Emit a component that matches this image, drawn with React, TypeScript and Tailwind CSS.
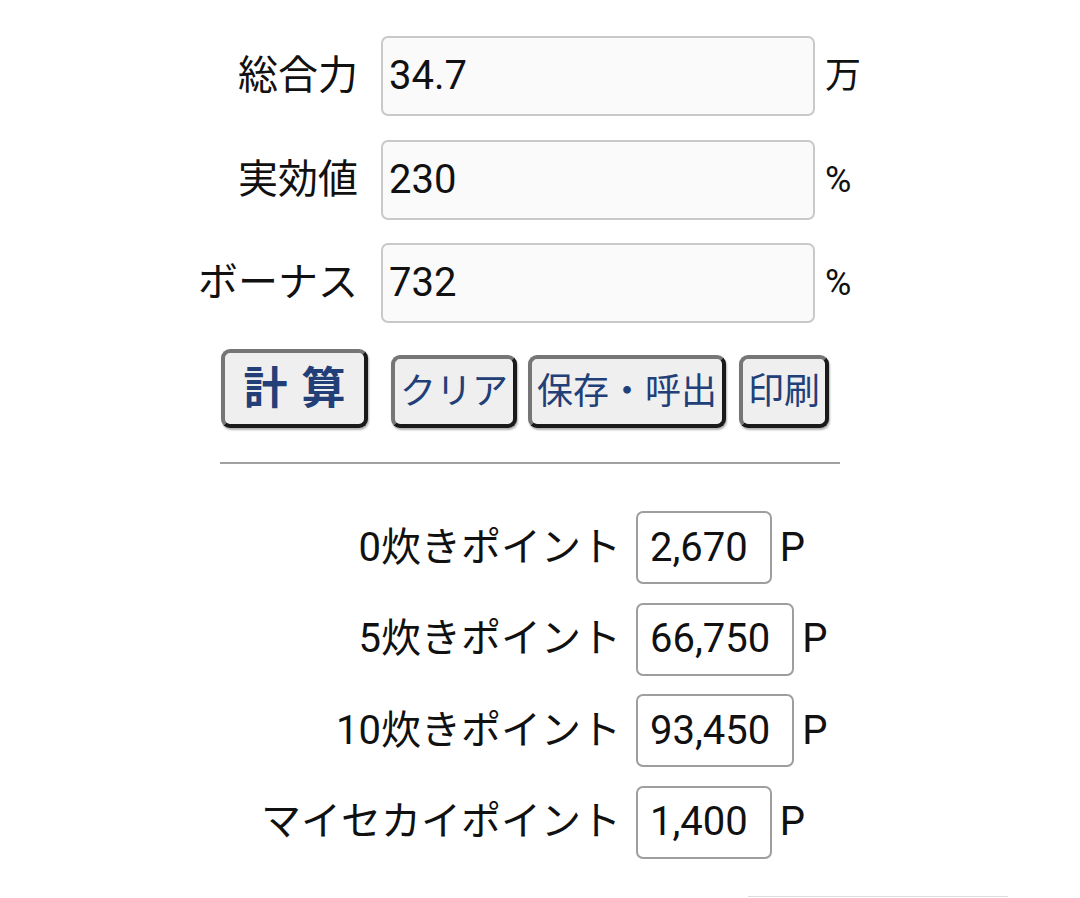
import React from 'react';

const font = { fontFamily: 'Roboto, "Noto Sans CJK JP", sans-serif' };

interface FieldRowProps {
  label: string;
  value: string;
  unit: string;
}

const FieldRow: React.FC<FieldRowProps> = ({ label, value, unit }) => (
  <div className="flex items-center">
    <div className="w-[180px] text-right text-[40px] leading-none text-[#111]">{label}</div>
    <div className="ml-[23px] w-[434px] h-[80px] flex items-center pl-[6px] bg-[#fafafa] border-2 border-[#c9c9c9] rounded-[7px] text-[40px] text-[#111]">
      {value}
    </div>
    <div className="ml-[10px] text-[36px] text-[#111]">{unit}</div>
  </div>
);

interface PointRowProps {
  label: string;
  value: string;
}

const PointRow: React.FC<PointRowProps> = ({ label, value }) => (
  <div className="flex items-center">
    <div className="w-[404px] text-right text-[40px] leading-none text-[#111]">{label}</div>
    <div className="ml-[15px] h-[73px] flex items-center pl-[12px] pr-[22px] border-2 border-[#9e9e9e] rounded-[7px] text-[40px] text-[#111]">
      {value}
    </div>
    <div className="ml-[8px] text-[40px] text-[#111]">P</div>
  </div>
);

const btn =
  'flex items-center justify-center bg-[#efefef] border-4 border-t-[#767676] border-l-[#767676] border-r-[#1a1a1a] border-b-[#1a1a1a] rounded-[9px] text-[#223f78] shadow-[1px_2px_2px_rgba(0,0,0,0.3)]';

const App: React.FC = () => {
  const points = [
    { label: '0炊きポイント', value: '2,670' },
    { label: '5炊きポイント', value: '66,750' },
    { label: '10炊きポイント', value: '93,450' },
    { label: 'マイセカイポイント', value: '1,400' },
  ];

  return (
    <div className="w-[1080px] min-h-[898px] bg-white overflow-hidden" style={font}>
      <div className="pt-[36px] ml-[178px] flex flex-col gap-[23.5px]">
        <FieldRow label="総合力" value="34.7" unit="万" />
        <FieldRow label="実効値" value="230" unit="%" />
        <FieldRow label="ボーナス" value="732" unit="%" />
      </div>

      {/* buttons */}
      <div className="mt-[26px] ml-[221px] flex items-end">
        <button className={`${btn} w-[147px] h-[79px] text-[44px] font-bold gap-[14px]`}>
          <span>計</span>
          <span>算</span>
        </button>
        <button className={`${btn} ml-[23px] w-[126px] h-[73px] text-[36px]`}>クリア</button>
        <button className={`${btn} ml-[11px] w-[198px] h-[73px] text-[36px]`}>保存・呼出</button>
        <button className={`${btn} ml-[13px] w-[90px] h-[73px] text-[36px]`}>印刷</button>
      </div>

      <div className="mt-[34px] ml-[220px] w-[620px] border-t-2 border-[#a0a0a0]" />

      <div className="mt-[47px] ml-[217px] flex flex-col gap-[18.5px]">
        {points.map((p) => (
          <PointRow key={p.label} label={p.label} value={p.value} />
        ))}
      </div>

      <div className="mt-[37px] ml-[748px] w-[260px] border-t border-[#dcdcdc]" />
    </div>
  );
};

export default App;
